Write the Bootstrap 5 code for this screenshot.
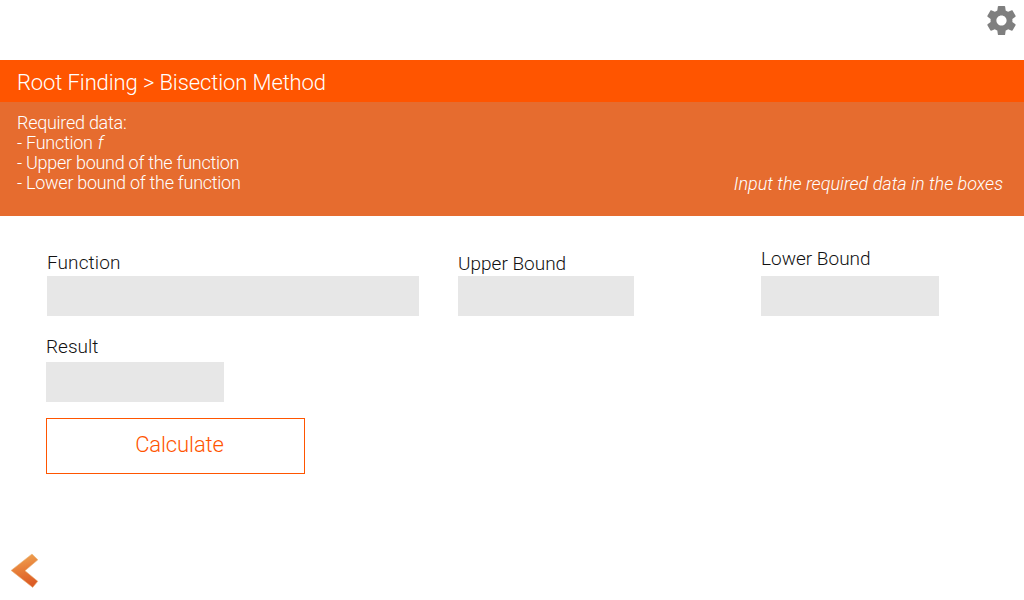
<!DOCTYPE html>
<html lang="en">
<head>
<meta charset="utf-8">
<meta name="viewport" content="width=device-width, initial-scale=1">
<title>Root Finding - Bisection Method</title>
<link href="https://cdn.jsdelivr.net/npm/bootstrap@5.3.0/dist/css/bootstrap.min.css" rel="stylesheet">
<style>
body { font-family: Roboto, sans-serif; font-weight: 300; color: #111; height: 600px; overflow: hidden; }
.topbar { height: 60px; padding: 3px 4px 0 0; }
.crumbs { height: 42px; background: #ff5500; font-size: 22px; line-height: 46px; padding-left: 17px; font-weight: 300; letter-spacing: -.11px; }
.info { height: 114px; background: #e66c2f; padding: 11px 21px 0 17px; font-size: 18px; line-height: 20px; }
.needs { letter-spacing: -.27px; }
.needs em { margin-left: 1px; }
.hint { padding-bottom: 22px; }
.fields { padding: 30px 0 0 47px; }
.field-label { font-size: 19px; line-height: 26px; height: 30px; font-weight: 300; }
.label-short { height: 28px; }
.field-box { height: 40px; background: #e7e7e7; border: 0; border-radius: 0; }
.w-function { width: 372px; margin-right: 39px; }
.w-upper { width: 176px; margin-right: 127px; }
.w-bound { width: 178px; }
.drop-low { padding-top: 5px; }
.drop { padding-top: 4px; letter-spacing: .1px; }
.result { padding: 18px 0 0 46px; }
.btn-calc { width: 259px; height: 56px; margin: 16px 0 0 46px; padding: 0 0 4px 8px; border: 1px solid #ff5500; color: #ff5500; font-size: 22px; font-weight: 300; border-radius: 0; letter-spacing: -.1px; }
.back { padding: 0 0 11px 9px; }
</style>
</head>
<body class="d-flex flex-column bg-white">
<header class="topbar d-flex justify-content-end align-items-start">
  <a href="#" aria-label="Settings" class="d-block lh-1">
    <svg class="d-block" width="36" height="35" viewBox="0 0 36 35" fill="#7f7f7f"><path transform="scale(1.458)" d="M19.43 12.98c.04-.32.07-.64.07-.98s-.03-.66-.07-.98l2.11-1.65c.19-.15.24-.42.12-.64l-2-3.46c-.12-.22-.39-.3-.61-.22l-2.49 1c-.52-.4-1.08-.73-1.69-.98l-.38-2.65C14.46 2.18 14.25 2 14 2h-4c-.25 0-.46.18-.49.42l-.38 2.65c-.61.25-1.17.59-1.69.98l-2.49-1c-.23-.09-.49 0-.61.22l-2 3.46c-.13.22-.07.49.12.64l2.11 1.65c-.04.32-.07.65-.07.98s.03.66.07.98l-2.11 1.65c-.19.15-.24.42-.12.64l2 3.46c.12.22.39.3.61.22l2.49-1c.52.4 1.08.73 1.69.98l.38 2.65c.03.24.24.42.49.42h4c.25 0 .46-.18.49-.42l.38-2.65c.61-.25 1.17-.59 1.69-.98l2.49 1c.23.09.49 0 .61-.22l2-3.46c.12-.22.07-.49-.12-.64l-2.11-1.65zM12 15.5c-1.93 0-3.5-1.57-3.5-3.5s1.57-3.5 3.5-3.5 3.5 1.57 3.5 3.5-1.57 3.5-3.5 3.5z"/></svg>
  </a>
</header>
<h1 class="crumbs text-white m-0">Root Finding &gt; Bisection Method</h1>
<section class="info d-flex justify-content-between align-items-stretch text-white">
  <div class="needs">
    <div>Required data:</div>
    <div>- Function <em>f</em></div>
    <div>- Upper bound of the function</div>
    <div>- Lower bound of the function</div>
  </div>
  <div class="hint align-self-end"><em>Input the required data in the boxes</em></div>
</section>
<main>
  <div class="fields d-flex">
    <div class="w-function">
      <label class="field-label d-block drop" for="fn">Function</label>
      <input id="fn" class="field-box form-control">
    </div>
    <div class="w-upper">
      <label class="field-label d-block drop-low" for="up">Upper Bound</label>
      <input id="up" class="field-box form-control">
    </div>
    <div class="w-bound">
      <label class="field-label d-block" for="low">Lower Bound</label>
      <input id="low" class="field-box form-control">
    </div>
  </div>
  <div class="result">
    <label class="field-label label-short d-block" for="res">Result</label>
    <input id="res" class="field-box form-control w-bound">
  </div>
  <button class="btn btn-calc d-block" type="button">Calculate</button>
</main>
<footer class="back mt-auto">
  <a href="#" aria-label="Back" class="d-block lh-1">
    <svg class="d-block" width="31" height="37" viewBox="9 552 31 37">
      <defs><linearGradient id="g" x1="0" y1="0" x2="0.2" y2="1"><stop offset="0" stop-color="#f0ac58"/><stop offset=".5" stop-color="#e8803a"/><stop offset="1" stop-color="#dc5c25"/></linearGradient></defs>
      <path d="M11.1 570.4 32 554 37.9 559.8 25 570.7 37.8 581.3 32.7 587.4Z" fill="url(#g)" stroke="#e9b67c" stroke-width=".6"/>
    </svg>
  </a>
</footer>
<script src="https://cdn.jsdelivr.net/npm/bootstrap@5.3.0/dist/js/bootstrap.bundle.min.js"></script>
</body>
</html>
